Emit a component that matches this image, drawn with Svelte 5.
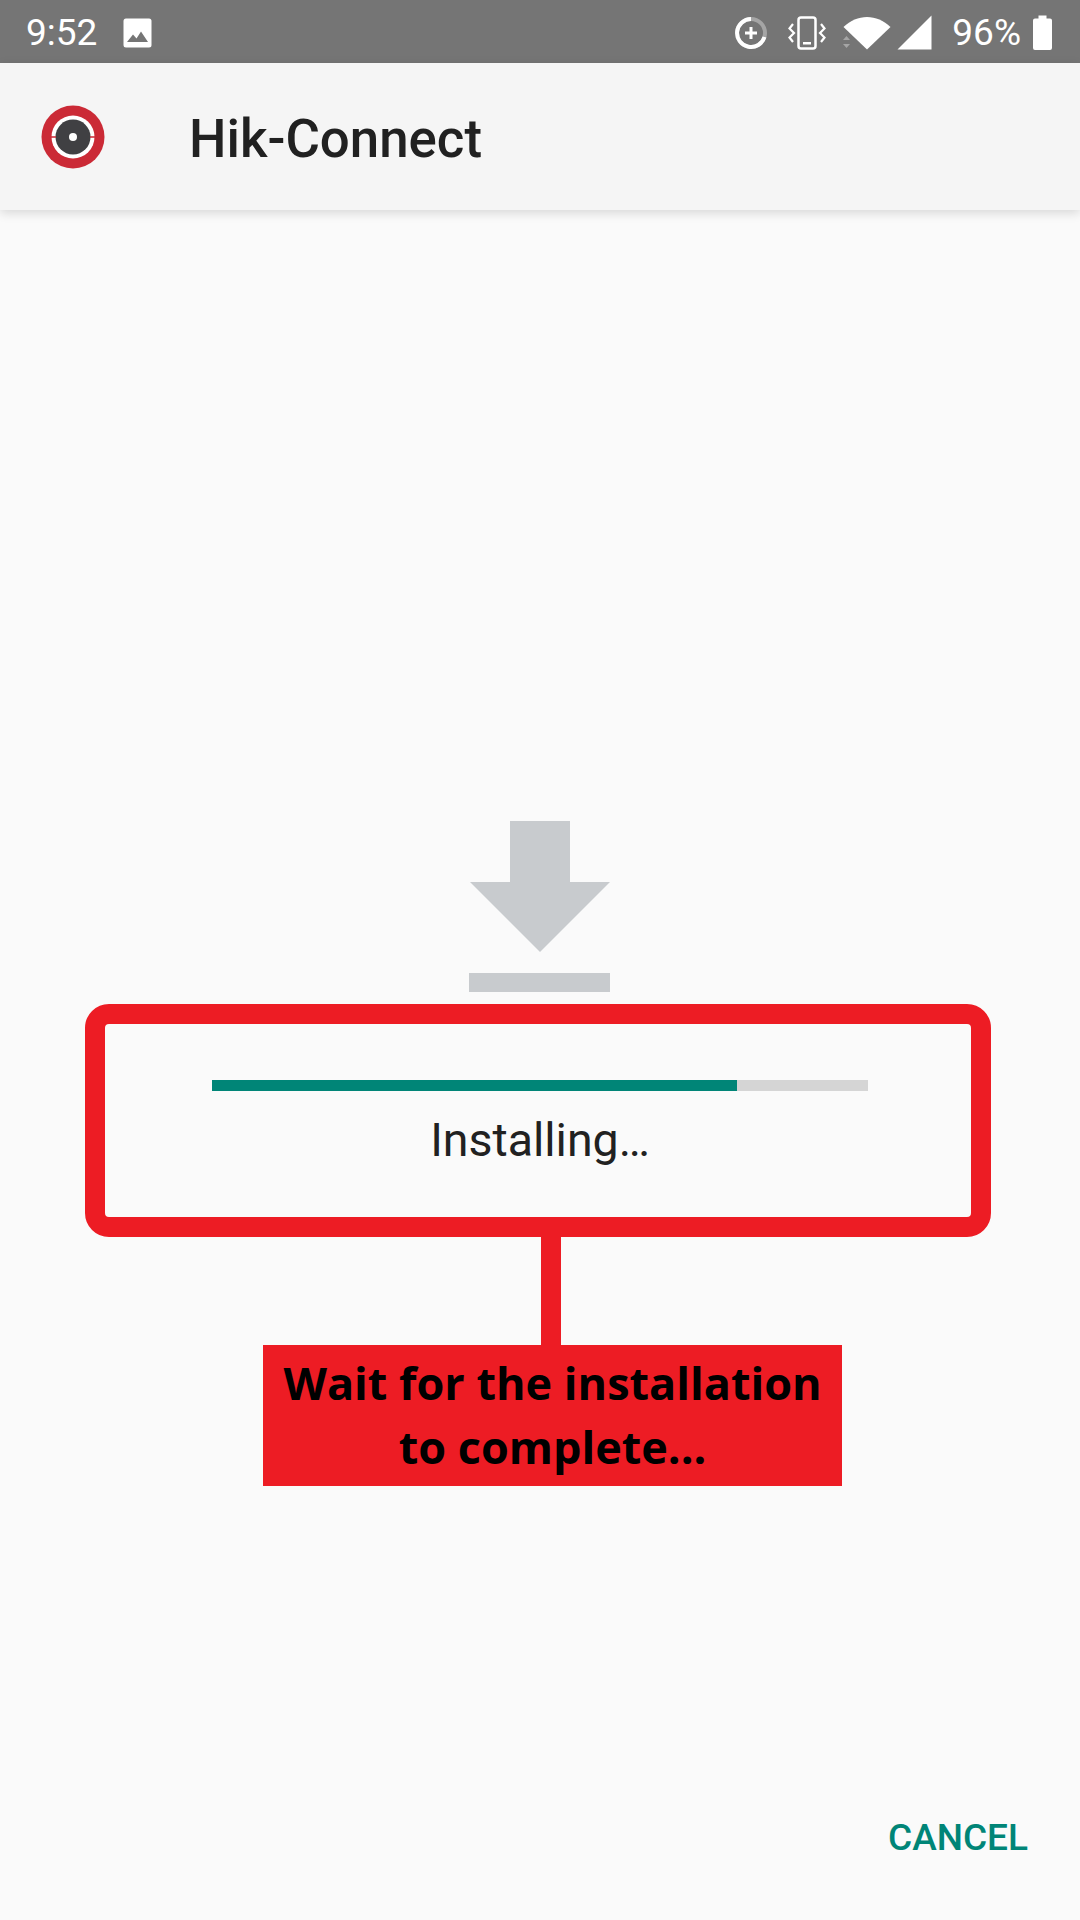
<script>
  let progress = 80;
</script>

<div class="screen">
  <div class="status-bar">
    <div class="status-left">
      <span class="time">9:52</span>
      <svg class="pic-icon" width="29" height="30" viewBox="0 0 29 30">
        <rect x="0.5" y="0.5" width="28" height="29" rx="2.5" fill="#fff" />
        <path d="M4 24 L10 16.5 L13.5 20.5 L18 13.5 L25 24 Z" fill="#757575" />
      </svg>
    </div>
    <div class="status-right">
      <svg class="saver" width="34" height="34" viewBox="0 0 34 34" fill="none">
        <circle cx="17" cy="17" r="14" stroke="#fff" stroke-opacity="0.35" stroke-width="4" />
        <path d="M17 3 A14 14 0 1 0 30.5 21" stroke="#fff" stroke-width="4" />
        <path d="M17 11 V23 M11 17 H23" stroke="#fff" stroke-width="3" />
      </svg>
      <svg class="vibrate" width="38" height="34" viewBox="0 0 38 34" fill="none">
        <rect x="10.5" y="1.5" width="17" height="31" rx="2.5" stroke="#fff" stroke-width="2.5" />
        <rect x="15" y="26" width="8" height="2.5" fill="#fff" />
        <path d="M5 8 L1.5 12.5 L6 17 L1.5 21.5 L5 26 M33 8 L36.5 12.5 L32 17 L36.5 21.5 L33 26" stroke="#fff" stroke-width="2.2" />
      </svg>
      <svg class="wifi" width="48" height="34" viewBox="0 0 48 34">
        <path d="M0.5 11 C14 -2.5 34 -2.5 47.5 11 L24 33.5 Z" fill="#fff" />
        <path d="M0 22 L3.5 18 L7 22 Z M0 26 L7 26 L3.5 30 Z" fill="#fff" fill-opacity="0.35" transform="translate(0 2)" />
      </svg>
      <svg class="signal" width="35" height="35" viewBox="0 0 35 35">
        <path d="M34.5 0.5 V34.5 H0.5 Z" fill="#fff" />
      </svg>
      <span class="battery-text">96%</span>
      <svg class="battery" width="19" height="35" viewBox="0 0 19 35">
        <path d="M5.5 0.5 H13.5 V3.5 H17 A2 2 0 0 1 19 5.5 V33 A2 2 0 0 1 17 35 H2 A2 2 0 0 1 0 33 V5.5 A2 2 0 0 1 2 3.5 H5.5 Z" fill="#fff" />
      </svg>
    </div>
  </div>

  <header class="app-bar">
    <svg class="logo" width="64" height="64" viewBox="0 0 64 64">
      <circle cx="32" cy="32" r="31.5" fill="#cb2a36" />
      <circle cx="32" cy="32" r="21.5" fill="#fff" />
      <circle cx="32" cy="32" r="17.5" fill="#404043" />
      <circle cx="32" cy="32" r="4" fill="#fff" />
      <path d="M10 32 H15 M49 32 H54" stroke="#cb2a36" stroke-width="1.5" />
    </svg>
    <h1>Hik-Connect</h1>
  </header>

  <main>
    <svg class="download" width="141" height="171" viewBox="0 0 141 171">
      <path d="M41 0 H101 V61 H141 L71 131 L1 61 H41 Z" fill="#c8cbce" />
      <rect x="0" y="152" width="141" height="19" fill="#c8cbce" />
    </svg>

    <div class="frame">
      <div class="track">
        <div class="fill" style="width: {progress}%"></div>
      </div>
      <p class="label">Installing…</p>
    </div>

    <div class="connector"></div>
    <div class="callout">Wait for the installation<br />to complete...</div>

    <button class="cancel">CANCEL</button>
  </main>
</div>

<style>
  :global(body) {
    margin: 0;
    background: #fafafa;
  }
  .screen {
    display: flex;
    flex-direction: column;
    width: 1080px;
    height: 1920px;
    overflow: hidden;
    font-family: Roboto, sans-serif;
    background: #fafafa;
  }
  .status-bar {
    display: flex;
    align-items: center;
    justify-content: space-between;
    height: 63px;
    padding: 2px 28px 0 26px;
    box-sizing: border-box;
    background: #757575;
    color: #fff;
  }
  .status-left,
  .status-right {
    display: flex;
    align-items: center;
  }
  .time {
    font-size: 37px;
    width: 97px;
  }
  .saver {
    margin-right: 20px;
  }
  .vibrate {
    margin-right: 17px;
  }
  .wifi {
    margin-right: 6px;
  }
  .signal {
    margin-right: 20px;
  }
  .battery-text {
    font-size: 37px;
    margin-right: 12px;
  }
  .app-bar {
    position: relative;
    display: flex;
    align-items: center;
    height: 147px;
    padding-left: 41px;
    box-sizing: border-box;
    background: #f5f5f5;
    box-shadow: 0 3px 10px rgba(0, 0, 0, 0.14);
  }
  h1 {
    margin: 4px 0 0 84px;
    font-size: 52.8px;
    font-weight: 500;
    color: #212121;
  }
  main {
    flex: 1;
    display: flex;
    flex-direction: column;
    align-items: flex-start;
    padding-top: 611px;
  }
  .download {
    margin-left: 469px;
  }
  .frame {
    width: 906px;
    height: 233px;
    margin: 12px 0 0 85px;
    padding: 56px 0 0 4px;
    box-sizing: border-box;
    border: 20px solid #ed1c24;
    border-radius: 24px;
    display: flex;
    flex-direction: column;
    align-items: center;
  }
  .track {
    width: 656px;
    height: 11px;
    background: #d5d5d5;
  }
  .fill {
    height: 100%;
    background: #008577;
  }
  .label {
    margin: 22px 0 0;
    font-size: 46.5px;
    color: #212121;
  }
  .connector {
    width: 20px;
    height: 108px;
    margin-left: 541px;
    background: #ed1c24;
  }
  .callout {
    width: 579px;
    height: 141px;
    margin-left: 263px;
    padding-top: 6px;
    box-sizing: border-box;
    background: #ed1c24;
    color: #000;
    font-family: "Open Sans", sans-serif;
    font-size: 45px;
    font-weight: 700;
    line-height: 64px;
    text-align: center;
  }
  .cancel {
    align-self: flex-end;
    margin: auto 52px 61px 0;
    padding: 0;
    border: none;
    background: none;
    font-family: Roboto, sans-serif;
    font-size: 37px;
    font-weight: 500;
    color: #008577;
  }
</style>
